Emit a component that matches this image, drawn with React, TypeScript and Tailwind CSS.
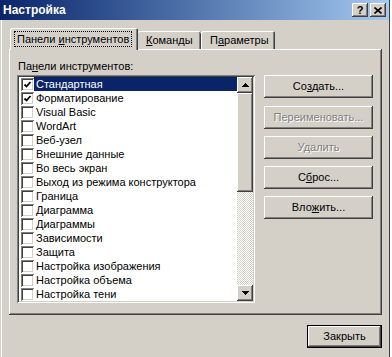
const raised =
  "shadow-[inset_-1px_-1px_#404040,inset_1px_1px_#ffffff,inset_-2px_-2px_#808080,inset_2px_2px_#d4d0c8]";
const sunken =
  "shadow-[inset_1px_1px_#808080,inset_-1px_-1px_#ffffff,inset_2px_2px_#404040,inset_-2px_-2px_#d4d0c8]";

const TOOLBARS = [
  { name: "Стандартная", checked: true },
  { name: "Форматирование", checked: true },
  { name: "Visual Basic", checked: false },
  { name: "WordArt", checked: false },
  { name: "Веб-узел", checked: false },
  { name: "Внешние данные", checked: false },
  { name: "Во весь экран", checked: false },
  { name: "Выход из режима конструктора", checked: false },
  { name: "Граница", checked: false },
  { name: "Диаграмма", checked: false },
  { name: "Диаграммы", checked: false },
  { name: "Зависимости", checked: false },
  { name: "Защита", checked: false },
  { name: "Настройка изображения", checked: false },
  { name: "Настройка объема", checked: false },
  { name: "Настройка тени", checked: false },
];

const Arrow = ({ down }: { down?: boolean }) => (
  <svg width="7" height="4" viewBox="0 0 7 4" shapeRendering="crispEdges">
    {down ? <path d="M0 0h7L3.5 4z" fill="#000" /> : <path d="M0 4h7L3.5 0z" fill="#000" />}
  </svg>
);

const Checkbox = ({ checked }: { checked: boolean }) => (
  <div className={`w-[13px] h-[13px] shrink-0 bg-white flex items-center justify-center ${sunken}`}>
    {checked && (
      <svg width="9" height="9" viewBox="0 0 9 9">
        <path d="M1.5 4.5 L3.5 6.5 L7.5 2" stroke="#000" strokeWidth="1.8" fill="none" />
      </svg>
    )}
  </div>
);

const SideButton = ({ children, disabled }: { children: React.ReactNode; disabled?: boolean }) => (
  <div
    className={`w-[109px] h-[23px] flex items-center justify-center bg-[#d4d0c8] ${raised} ${
      disabled ? "text-[#808080] [text-shadow:1px_1px_0_#ffffff]" : "text-black"
    }`}
  >
    {children}
  </div>
);

export default function App() {
  return (
    <div className="w-[392px] h-[357px] bg-white overflow-hidden font-['Tahoma','Liberation_Sans',sans-serif] text-[11px] leading-[13px] text-black">
      <div className="w-[390px] h-full bg-[#d4d0c8] border-r border-[#404040] flex flex-col shadow-[inset_1px_0_#d4d0c8,inset_2px_0_#ffffff]">
        {/* title bar */}
        <div className="h-[20px] shrink-0 flex items-center pl-[3px] pr-[3px] bg-gradient-to-r from-[#0a246a] to-[#a6caf0]">
          <span className="text-white font-bold text-[12px] font-['Liberation_Sans',sans-serif]">Настройка</span>
          <div className="ml-auto flex gap-[2px]">
            <div className={`w-[16px] h-[14px] bg-[#d4d0c8] flex items-center justify-center font-bold text-[11px] leading-none ${raised}`}>
              ?
            </div>
            <div className={`w-[16px] h-[14px] bg-[#d4d0c8] flex items-center justify-center ${raised}`}>
              <svg width="8" height="7" viewBox="0 0 8 7">
                <path d="M0.5 0.5 L7.5 6.5 M7.5 0.5 L0.5 6.5" stroke="#000" strokeWidth="1.6" />
              </svg>
            </div>
          </div>
        </div>

        <div className="flex flex-col pl-[9px] pt-[8px] w-[382px]">
          {/* tabs */}
          <div className="relative z-10 flex items-end h-[21px] pl-[1px]">
            <div className="h-[22px] -mb-[1px] w-[128px] bg-[#d4d0c8] rounded-t-[2px] shadow-[inset_1px_1px_#ffffff,inset_-1px_0_#404040,inset_-2px_0_#808080] flex items-center pl-[4px]">
              <span className="border border-dotted border-black px-[2px] py-[1px] leading-[12px]">
                Панели <span className="underline">и</span>нструментов
              </span>
            </div>
            <div className="h-[18px] w-[63px] rounded-t-[2px] shadow-[inset_0_1px_#ffffff,inset_-1px_0_#404040,inset_-2px_0_#808080] flex items-center pl-[8px]">
              <span>
                <span className="underline">К</span>оманды
              </span>
            </div>
            <div className="h-[18px] w-[74px] rounded-t-[2px] shadow-[inset_1px_1px_#ffffff,inset_-1px_0_#404040,inset_-2px_0_#808080] flex items-center pl-[9px]">
              <span>
                П<span className="underline">а</span>раметры
              </span>
            </div>
          </div>

          {/* tab panel */}
          <div className={`w-[373px] h-[266px] flex flex-col pl-[8px] pt-[11px] ${raised}`}>
            <div className="pl-[1px]">
              Па<span className="underline">н</span>ели инструментов:
            </div>
            <div className="flex mt-[2px]">
              <div className={`w-[238px] h-[228px] bg-white p-[2px] flex ${sunken}`}>
                <div className="flex-1 flex flex-col">
                  {TOOLBARS.map((t, i) => (
                    <div key={t.name} className="h-[14px] flex items-center pl-[2px]">
                      <Checkbox checked={t.checked} />
                      <div
                        className={`flex-1 h-[14px] flex items-center pl-[2px] ${
                          i === 0 ? "bg-[#0a246a] text-white" : ""
                        }`}
                      >
                        {t.name}
                      </div>
                    </div>
                  ))}
                </div>
                <div className="w-[16px] flex flex-col">
                  <div className={`h-[16px] bg-[#d4d0c8] flex items-center justify-center ${raised}`}>
                    <Arrow />
                  </div>
                  <div className={`h-[99px] bg-[#d4d0c8] ${raised}`} />
                  <div className="flex-1 bg-[repeating-conic-gradient(#d4d0c8_0_25%,#ffffff_0_50%)] bg-[length:2px_2px]" />
                  <div className={`h-[16px] bg-[#d4d0c8] flex items-center justify-center ${raised}`}>
                    <Arrow down />
                  </div>
                </div>
              </div>

              <div className="ml-[9px] flex flex-col">
                <SideButton>
                  Со<span className="underline">з</span>дать...
                </SideButton>
                <div className="mt-[8px]">
                  <SideButton disabled>Переименовать...</SideButton>
                </div>
                <div className="mt-[7px]">
                  <SideButton disabled>Удалить</SideButton>
                </div>
                <div className="mt-[7px]">
                  <SideButton>
                    С<span className="underline">б</span>рос...
                  </SideButton>
                </div>
                <div className="mt-[7px]">
                  <SideButton>
                    Вло<span className="underline">ж</span>ить...
                  </SideButton>
                </div>
              </div>
            </div>
          </div>

          {/* footer */}
          <div className="w-[373px] flex justify-end mt-[10px]">
            <div className="w-[75px] h-[23px] border border-black bg-[#d4d0c8]">
              <div className={`w-full h-full flex items-center justify-center ${raised}`}>Закрыть</div>
            </div>
          </div>
        </div>
      </div>
    </div>
  );
}
